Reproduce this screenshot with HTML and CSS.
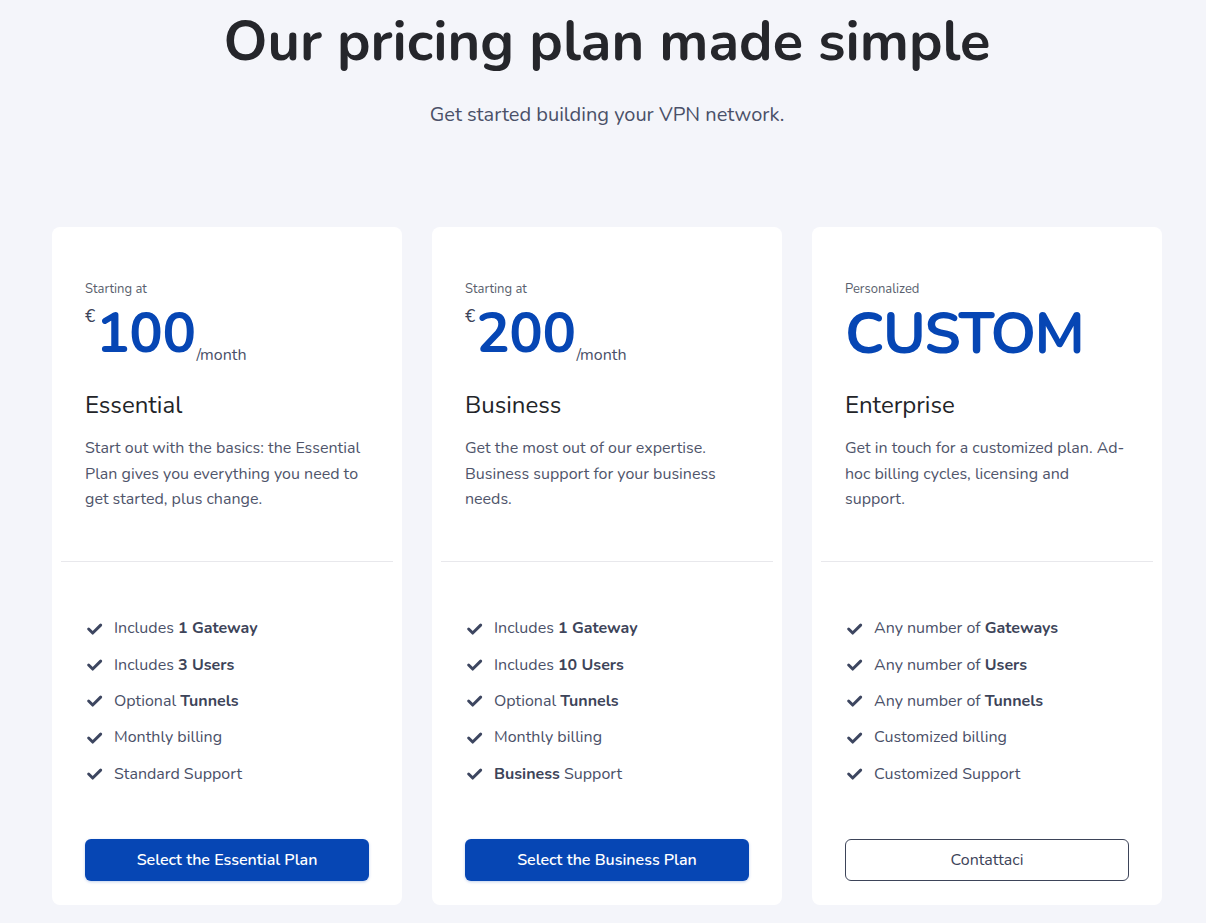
FILE: index.html
```html
<!DOCTYPE html>
<html lang="en">
<head>
<meta charset="utf-8">
<title>Pricing</title>
<link rel="stylesheet" href="styles.css">
</head>
<body>
<main class="page">
  <header class="intro">
    <h1 class="title">Our pricing plan made simple</h1>
    <p class="subtitle">Get started building your VPN network.</p>
  </header>
  <section class="plans">
    <article class="card">
      <div class="card-head">
        <div class="eyebrow">Starting at</div>
        <div class="price"><span class="cur">€</span><span class="amount">100</span><span class="per">/month</span></div>
        <h2 class="plan-name">Essential</h2>
        <p class="desc">Start out with the basics: the Essential Plan gives you everything you need to get started, plus change.</p>
      </div>
      <hr class="divider">
      <ul class="features">
        <li><svg class="check" viewBox="0 0 16 16"><path d="M2.5 8.5l3.8 3.8L13.8 4.8"/></svg><span>Includes <b>1 Gateway</b></span></li>
        <li><svg class="check" viewBox="0 0 16 16"><path d="M2.5 8.5l3.8 3.8L13.8 4.8"/></svg><span>Includes <b>3 Users</b></span></li>
        <li><svg class="check" viewBox="0 0 16 16"><path d="M2.5 8.5l3.8 3.8L13.8 4.8"/></svg><span>Optional <b>Tunnels</b></span></li>
        <li><svg class="check" viewBox="0 0 16 16"><path d="M2.5 8.5l3.8 3.8L13.8 4.8"/></svg><span>Monthly billing</span></li>
        <li><svg class="check" viewBox="0 0 16 16"><path d="M2.5 8.5l3.8 3.8L13.8 4.8"/></svg><span>Standard Support</span></li>
      </ul>
      <div class="card-foot"><a class="btn btn-primary" href="#">Select the Essential Plan</a></div>
    </article>
    <article class="card">
      <div class="card-head">
        <div class="eyebrow">Starting at</div>
        <div class="price"><span class="cur">€</span><span class="amount">200</span><span class="per">/month</span></div>
        <h2 class="plan-name">Business</h2>
        <p class="desc">Get the most out of our expertise. Business support for your business needs.</p>
      </div>
      <hr class="divider">
      <ul class="features">
        <li><svg class="check" viewBox="0 0 16 16"><path d="M2.5 8.5l3.8 3.8L13.8 4.8"/></svg><span>Includes <b>1 Gateway</b></span></li>
        <li><svg class="check" viewBox="0 0 16 16"><path d="M2.5 8.5l3.8 3.8L13.8 4.8"/></svg><span>Includes <b>10 Users</b></span></li>
        <li><svg class="check" viewBox="0 0 16 16"><path d="M2.5 8.5l3.8 3.8L13.8 4.8"/></svg><span>Optional <b>Tunnels</b></span></li>
        <li><svg class="check" viewBox="0 0 16 16"><path d="M2.5 8.5l3.8 3.8L13.8 4.8"/></svg><span>Monthly billing</span></li>
        <li><svg class="check" viewBox="0 0 16 16"><path d="M2.5 8.5l3.8 3.8L13.8 4.8"/></svg><span><b>Business</b> Support</span></li>
      </ul>
      <div class="card-foot"><a class="btn btn-primary" href="#">Select the Business Plan</a></div>
    </article>
    <article class="card">
      <div class="card-head">
        <div class="eyebrow">Personalized</div>
        <div class="price"><span class="amount custom">CUSTOM</span></div>
        <h2 class="plan-name">Enterprise</h2>
        <p class="desc">Get in touch for a customized plan. Ad-hoc billing cycles, licensing and support.</p>
      </div>
      <hr class="divider">
      <ul class="features">
        <li><svg class="check" viewBox="0 0 16 16"><path d="M2.5 8.5l3.8 3.8L13.8 4.8"/></svg><span>Any number of <b>Gateways</b></span></li>
        <li><svg class="check" viewBox="0 0 16 16"><path d="M2.5 8.5l3.8 3.8L13.8 4.8"/></svg><span>Any number of <b>Users</b></span></li>
        <li><svg class="check" viewBox="0 0 16 16"><path d="M2.5 8.5l3.8 3.8L13.8 4.8"/></svg><span>Any number of <b>Tunnels</b></span></li>
        <li><svg class="check" viewBox="0 0 16 16"><path d="M2.5 8.5l3.8 3.8L13.8 4.8"/></svg><span>Customized billing</span></li>
        <li><svg class="check" viewBox="0 0 16 16"><path d="M2.5 8.5l3.8 3.8L13.8 4.8"/></svg><span>Customized Support</span></li>
      </ul>
      <div class="card-foot"><a class="btn btn-outline" href="#">Contattaci</a></div>
    </article>
  </section>
</main>
</body>
</html>
```

FILE: styles.css
```css
* { box-sizing: border-box; }
html, body { margin: 0; padding: 0; }
body {
  background: #f4f5fa;
  font-family: "Nunito", "Lato", "Noto Sans", sans-serif;
  color: #4a5068;
}
.page {
  padding: 8px 0 0 8px;
}
.intro { text-align: center; }
.title {
  margin: 0;
  font-size: 56px;
  line-height: 1.2;
  font-weight: 700;
  color: #25262b;
}
.subtitle {
  margin: 26px 0 0;
  font-size: 20px;
  line-height: 1.4;
  color: #4a5068;
}
.plans {
  width: 1110px;
  margin: 98px auto 0;
  display: grid;
  grid-template-columns: repeat(3, 350px);
  gap: 30px;
}
.card {
  background: #fff;
  border-radius: 8px;
  display: flex;
  flex-direction: column;
  padding-bottom: 24px;
}
.card-head {
  padding: 54px 33px 0;
  height: 334px;
}
.eyebrow {
  font-size: 13px;
  line-height: 16px;
  color: #5a5f6e;
}
.price {
  display: flex;
  align-items: flex-start;
  height: 62px;
  margin-top: 6px;
  color: #0646b4;
}
.cur {
  font-size: 17px;
  line-height: 20px;
  color: #3d4459;
  margin-top: 4px;
  margin-right: 1px;
}
.amount {
  font-size: 56px;
  line-height: 62px;
  font-weight: 700;
  letter-spacing: -0.5px;
}
.amount.custom { font-size: 58px; letter-spacing: -1.5px; }
.per {
  align-self: flex-end;
  font-size: 16px;
  line-height: 20px;
  color: #4a5068;
  margin-left: 1px;
}
.plan-name {
  margin: 24px 0 0;
  font-size: 24px;
  line-height: 32px;
  font-weight: 400;
  color: #222428;
}
.desc {
  margin: 15px 0 0;
  font-size: 16px;
  line-height: 25.5px;
  color: #4f556b;
}
.divider {
  margin: 0 9px;
  border: 0;
  border-top: 1px solid #e8e8ec;
}
.features {
  list-style: none;
  margin: 0;
  padding: 48px 33px 0;
  height: 277px;
}
.features li {
  display: flex;
  align-items: center;
  gap: 11px;
  height: 36.3px;
  font-size: 16px;
  color: #4a5068;
}
.features b { font-weight: 700; color: #3d4459; }
.check {
  width: 17px;
  height: 17px;
  flex: none;
  margin-left: 1px;
  fill: none;
  stroke: #3d4660;
  stroke-width: 2.8;
  stroke-linecap: round;
  stroke-linejoin: round;
}
.card-foot {
  padding: 0 33px;
}
.btn {
  display: flex;
  align-items: center;
  justify-content: center;
  width: 284px;
  height: 42px;
  border-radius: 6px;
  font-size: 16px;
  text-decoration: none;
}
.btn-primary {
  background: #0646b4;
  color: #fff;
  font-weight: 600;
  box-shadow: 0 1px 3px rgba(6, 70, 180, 0.25);
}
.btn-outline {
  background: #fff;
  color: #3d4459;
  border: 1px solid #3d4459;
}
```
